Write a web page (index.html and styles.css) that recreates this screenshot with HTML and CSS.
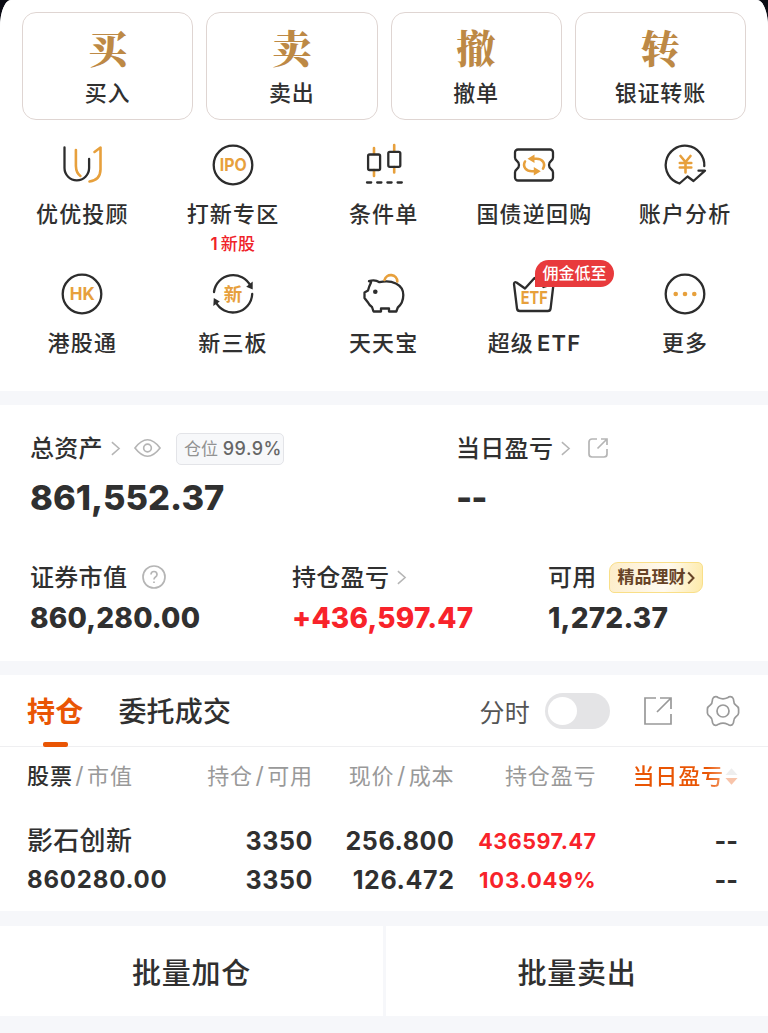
FILE: index.html
```html
<!DOCTYPE html>
<html lang="zh-CN">
<head>
<meta charset="utf-8">
<title>交易</title>
<link rel="stylesheet" href="styles.css">
</head>
<body>
<main class="sheet">
  <section class="cards">
    <div class="card"><b class="card-mark">买</b><span class="card-label">买入</span></div>
    <div class="card"><b class="card-mark">卖</b><span class="card-label">卖出</span></div>
    <div class="card"><b class="card-mark">撤</b><span class="card-label">撤单</span></div>
    <div class="card"><b class="card-mark">转</b><span class="card-label">银证转账</span></div>
  </section>

  <section class="tools">
    <div class="tool">
      <svg class="icon" viewBox="0 0 44 44"><path class="ink" d="M4.500 4.500v20.500a12.300 12.300 0 0 0 24.600 0V16"/><path class="gold" d="M15.900 7v16q.2 7 4.500 10M34.500 9l6-4.500v22q-.2 10.500-11 12"/></svg>
      <span class="label">优优投顾</span>
    </div>
    <div class="tool">
      <svg class="icon" viewBox="0 0 44 44"><circle class="ink" cx="22" cy="22" r="19.300"/><text class="icon-text" x="22.300" y="28.300" font-size="17.500" textLength="27" lengthAdjust="spacingAndGlyphs">IPO</text></svg>
      <span class="label">打新专区</span><span class="note">1<span class="note-text">新股</span></span>
    </div>
    <div class="tool">
      <svg class="icon" viewBox="0 0 44 44"><path class="gold" d="M12 5v6m0 16v6M32.200 2v6m0 16v5.500"/><rect class="ink" x="6.100" y="11.500" width="12" height="15.500" rx="1.500"/><rect class="ink" x="26.300" y="8.800" width="12" height="15" rx="1.500"/><path class="ink" d="M5 39.500h4.200m6 0h4.200m6 0h4.200m6 0h4.200"/></svg>
      <span class="label">条件单</span>
    </div>
    <div class="tool">
      <svg class="icon" viewBox="0 0 44 44"><path class="ink" d="M3 9.500a3 3 0 0 1 3-3h32a3 3 0 0 1 3 3v5q0 2-2 3.500a5 5 0 0 0 0 8q2 1.500 2 3.500v5a3 3 0 0 1-3 3H6a3 3 0 0 1-3-3v-5q0-2 2-3.500a5 5 0 0 0 0-8q-2-1.500-2-3.500z"/><path class="gold" d="M13 18.500c-3 5.500 1.500 9.800 7 9.800h4M20 15.700h4.500c6 0 9.500 4.500 6.500 10"/><path class="gold-fill" d="M22.500 11.500v8.400l-7-4.200zM21.800 24.100v8.400l7-4.200z"/></svg>
      <span class="label">国债逆回购</span>
    </div>
    <div class="tool">
      <svg class="icon" viewBox="0 0 44 44"><path class="ink" d="M41.300 23A19.300 19.300 0 1 0 16.500 40.500l8-7 6 4.500 11.500-10.300h-6.500"/><path class="gold" d="M17.500 13l5 6 5-6M22.500 20v9.500M16.800 20h11.500M16.800 24.500h11.500"/></svg>
      <span class="label">账户分析</span>
    </div>
    <div class="tool">
      <svg class="icon" viewBox="0 0 44 44"><circle class="ink" cx="22" cy="22" r="19.300"/><text class="icon-text" x="22.300" y="28.300" font-size="18" textLength="25" lengthAdjust="spacingAndGlyphs">HK</text></svg>
      <span class="label">港股通</span>
    </div>
    <div class="tool">
      <svg class="icon" viewBox="0 0 44 44"><path class="ink" d="M3 20A19.300 19.300 0 0 1 39.500 14M41.200 22A19.300 19.300 0 0 1 4.500 29.500"/><path class="ink-fill" d="M41.700 9.500v8l-6.500-2.800zM2.300 34l.5-8 6 3.500z"/><text class="icon-text" x="22" y="28.500" font-size="18.500">新</text></svg>
      <span class="label">新三板</span>
    </div>
    <div class="tool">
      <svg class="icon" viewBox="0 0 44 44"><path class="ink" d="M9 10.500q-.8-1-2-1.300c4-1.500 7.500-1 10.500 1C29.500 7.500 41.300 12 41.300 23c0 6-2.500 10-5.500 12.500l-1.500 4H27v-3h-8v3h-7.500L10 35q-2.500-1.500-4-4.500L2.500 26v-5.500L6 18.500q1-4 3-8z"/><path class="gold" d="M22.500 8a6.500 6.500 0 0 1 12.800 1.500"/><circle class="ink-fill" cx="13.300" cy="19.700" r="2.300"/></svg>
      <span class="label">天天宝</span>
    </div>
    <div class="tool">
      <svg class="icon" viewBox="0 0 44 44"><path class="ink" d="M2 12l3 24.500q.3 2.500 2.800 2.500h28q2.500 0 2.800-2.500L41.500 12l-10 3-9-9-9.500 10.500-8.500-6Q2 9.500 2 12z"/><text class="icon-text" x="22.300" y="32" font-size="18" textLength="27" lengthAdjust="spacingAndGlyphs">ETF</text></svg>
      <span class="label">超级 <span class="label-latin">ETF</span></span>
      <span class="badge">佣金低至</span>
    </div>
    <div class="tool">
      <svg class="icon" viewBox="0 0 44 44"><circle class="ink" cx="22" cy="22" r="19.300"/><g class="gold-fill"><circle cx="12.700" cy="22" r="2.300"/><circle cx="22" cy="22" r="2.300"/><circle cx="31.300" cy="22" r="2.300"/></g></svg>
      <span class="label">更多</span>
    </div>
  </section>

  <section class="assets">
    <div class="asset asset-total">
      <div class="asset-head"><span>总资产</span>
        <svg class="chevron" viewBox="0 0 10 16"><path d="M1 1l8 7-8 7"/></svg>
        <svg class="eye" viewBox="0 0 28 20"><path d="M1 10Q14-7 27 10 14 27 1 10z"/><circle cx="14" cy="10" r="4"/></svg>
        <span class="ratio">仓位 <b>99.9%</b></span>
      </div>
      <div class="asset-value large">861,552.37</div>
    </div>
    <div class="asset asset-today">
      <div class="asset-head"><span>当日盈亏</span>
        <svg class="chevron" viewBox="0 0 10 16"><path d="M1 1l8 7-8 7"/></svg>
        <svg class="share-small" viewBox="0 0 22 22"><path d="M10 2H5a3 3 0 0 0-3 3v12a3 3 0 0 0 3 3h12a3 3 0 0 0 3-3v-5M10.500 11.500L20 2M14 2h6v6"/></svg>
      </div>
      <div class="asset-value large dashes">--</div>
    </div>
    <div class="asset asset-market">
      <div class="asset-head"><span>证券市值</span>
        <svg class="help" viewBox="0 0 24 24"><circle cx="12" cy="12" r="11"/><path d="M9 9.500q0-3 3-3t3 3q0 1.500-1.500 2.500T12 14.500M12 16.500v1.500"/></svg>
      </div>
      <div class="asset-value">860,280.00</div>
    </div>
    <div class="asset asset-profit">
      <div class="asset-head"><span>持仓盈亏</span>
        <svg class="chevron" viewBox="0 0 10 16"><path d="M1 1l8 7-8 7"/></svg>
      </div>
      <div class="asset-value up">+436,597.47</div>
    </div>
    <div class="asset asset-cash">
      <div class="asset-head"><span>可用</span>
        <span class="promo"><span>精品理财</span><svg class="promo-arrow" viewBox="0 0 8 14"><path d="M1.200 1.500L6.500 7l-5.300 5.500"/></svg></span>
      </div>
      <div class="asset-value">1,272.37</div>
    </div>
  </section>

  <section class="holdings">
    <header class="tabs">
      <span class="tab active">持仓</span>
      <span class="tab">委托成交</span>
      <span class="switch-label">分时</span>
      <span class="switch"></span>
      <svg class="share" viewBox="0 0 30 30"><path d="M13 2H2v26h26V18M17 2h11v11M14 16L28 2"/></svg>
      <svg class="gear" viewBox="0 0 34 34"><path d="M12.500 3.800Q17 5.800 21.500 3.800q2.500-2.300 5-.3 1.200 1.200 1.200 3.200 0 2.800 2 4.300 3 2 2.900 4v4q.1 2-2.900 4-2 1.500-2 4.300 0 2-1.200 3.200-2.500 2-5-.3-4.500-2-9 0-2.500 2.300-5 .3-1.200-1.200-1.200-3.200 0-2.800-2-4.300-3-2-2.900-4v-4q-.1-2 2.900-4 2-1.500 2-4.300 0-2 1.200-3.200 2.500-2 5 .3z"/><circle cx="17" cy="17" r="6"/></svg>
    </header>
    <div class="row columns">
      <span><em>股票</em><i>/</i>市值</span>
      <span>持仓<i>/</i>可用</span>
      <span>现价<i>/</i>成本</span>
      <span>持仓盈亏</span>
      <span class="sorted">当日盈亏<svg class="sort" viewBox="0 0 14 20"><path class="sort-up" d="M7 1l6.500 7.500H.5z"/><path class="sort-down" d="M7 19l6.500-7.500H.5z"/></svg></span>
    </div>
    <div class="row stock first">
      <span class="name">影石创新</span><span>3350</span><span>256.800</span><span class="up">436597.47</span><span class="none">--</span>
    </div>
    <div class="row stock">
      <span class="amount">860280.00</span><span>3350</span><span>126.472</span><span class="up rate">103.049%</span><span class="none">--</span>
    </div>
  </section>

  <footer class="actions"><span>批量加仓</span><span>批量卖出</span></footer>
</main>
</body>
</html>
```
FILE: styles.css
```css
* { box-sizing: border-box; }
body {
  margin: 0;
  background: #0b0c14;
  color: #303030;
  font-family: Inter, "Noto Sans CJK SC", sans-serif;
}
svg { display: block; flex: none; fill: none; overflow: visible; }
em, i { font-style: normal; }
.sheet {
  display: flex;
  flex-direction: column;
  gap: 14px;
  height: 1033px;
  overflow: hidden;
  background: #f6f7fa;
  border-radius: 11px 11px 0 0 / 27px 27px 0 0;
}

.cards {
  display: grid;
  grid-template-columns: repeat(4, 1fr);
  gap: 13px;
  padding: 12px 22px 0;
  height: 120px;
  background: #fff;
  margin-bottom: -14px;
}
.card {
  display: flex;
  flex-direction: column;
  align-items: center;
  border: 1px solid #dfd5d2;
  border-radius: 14px;
  padding-top: 9px;
}
.card-mark {
  height: 48px;
  font: 900 39px/48px "Noto Serif CJK SC", "Noto Serif SC", "Noto Sans CJK SC", serif;
  color: #bd8945;
}
.card-label { font-size: 22px; font-weight: 500; line-height: 47px; letter-spacing: .8px; }

.tools {
  display: grid;
  grid-template-columns: repeat(5, 150.700px);
  grid-template-rows: 129px 142px;
  padding: 0 7px;
  height: 271px;
  background: #fff;
}
.tool {
  position: relative;
  display: flex;
  flex-direction: column;
  align-items: center;
  padding-top: 23px;
}
.icon { width: 44px; height: 44px; }
.ink { stroke: #2d2d2d; stroke-width: 2.300; stroke-linejoin: round; stroke-linecap: round; }
.gold { stroke: #e7a03c; stroke-width: 2.600; stroke-linejoin: round; stroke-linecap: round; }
.gold-fill { fill: #e7a03c; }
.ink-fill { fill: #2d2d2d; }
.icon-text { fill: #e7a03c; font-weight: 700; text-anchor: middle; }
.label { font-size: 22px; font-weight: 500; line-height: 36px; margin-top: 9px; letter-spacing: 1.200px; white-space: nowrap; }
.label-latin { font-weight: 600; letter-spacing: 1.100px; margin-left: -4px; }
.note { color: #f0232a; font-size: 17px; font-weight: 600; line-height: 22px; margin-top: 1px; }
.note-text { font-weight: 500; margin-left: 3px; letter-spacing: .5px; }
.badge {
  position: absolute;
  left: 76px;
  top: 11px;
  width: 79px;
  height: 27px;
  border-radius: 14px 14px 14px 0;
  background: #e83a3c;
  color: #fff;
  font-size: 16px;
  font-weight: 500;
  line-height: 26px;
  text-align: center;
}

.assets {
  display: grid;
  grid-template-columns: 262px 164px 92px 1fr;
  grid-template-rows: 129px 90px;
  padding: 27px 0 0 30px;
  height: 256px;
  background: #fff;
}
.asset-total { grid-column: 1 / 3; }
.asset-today { grid-column: 3 / 5; }
.asset-market { grid-column: 1; }
.asset-profit { grid-column: 2 / 4; }
.asset-cash { grid-column: 4; }
.asset-head { display: flex; align-items: center; height: 34px; font-size: 24px; letter-spacing: .3px; font-weight: 500; }
.asset-head > span:first-child { line-height: 30px; }
.asset-head > svg { stroke: #b5b5b5; stroke-width: 1.700; position: relative; top: -1px; }
.chevron { width: 9px; height: 15px; margin-left: 8px; }
.eye { width: 27px; height: 20px; margin-left: 14px; }
.ratio {
  width: 108px;
  height: 32px;
  margin-left: 15px;
  border: 1px solid #e3e4e8;
  border-radius: 5px;
  background: #f7f8fa;
  color: #929292;
  font-size: 17px;
  font-weight: 400;
  line-height: 30px;
  padding-left: 7px;
  letter-spacing: 0;
  white-space: nowrap;
}
.ratio b { color: #666; font-size: 18px; font-weight: 500; letter-spacing: .5px; }
.asset-value { font-size: 28px; font-weight: 800; line-height: 44px; letter-spacing: .2px; padding-top: 1px; white-space: nowrap; }
.large { font-size: 34.500px; line-height: 60px; padding-top: 2px; letter-spacing: 0; }
.dashes { letter-spacing: -1px; }
.share-small { width: 22px; height: 22px; margin-left: 17px; }
.help { width: 24px; height: 24px; margin-left: 15px; }
.up { color: #f8232a; }
.promo {
  display: flex;
  align-items: center;
  width: 94px;
  height: 31px;
  margin: -1px 0 0 12px;
  padding-left: 8px;
  border: 1px solid #f9df88;
  border-radius: 9px 5px 9px 5px;
  background: linear-gradient(100deg, #fdedc9, #fffaf0 60%, #fdeaa9);
  color: #674326;
  font-size: 17px;
  font-weight: 700;
  letter-spacing: 0;
}
.promo span { line-height: 24px; padding-bottom: 2px; }
.promo-arrow { width: 8px; height: 14px; margin-left: 1px; stroke: #674326; stroke-width: 2; }

.holdings { height: 236px; background: #fff; }
.tabs { display: flex; align-items: center; height: 72px; padding-left: 27px; border-bottom: 1px solid #efeff1; }
.tab { position: relative; font-size: 28px; font-weight: 500; letter-spacing: .2px; margin-right: 35px; height: 72px; line-height: 75px; }
.tab.active { color: #e95504; font-weight: 700; }
.tab.active::after {
  content: "";
  position: absolute;
  left: 16px;
  bottom: 0;
  width: 25px;
  height: 5px;
  border-radius: 2px;
  background: #e95504;
}
.switch-label { margin-left: auto; font-size: 25px; color: #555; letter-spacing: .3px; }
.switch { width: 65px; height: 36px; padding: 4px 3px; margin-left: 15px; border-radius: 18px; background: #e4e4e6; }
.switch::before { content: ""; display: block; width: 29px; height: 28px; border-radius: 50%; background: #fff; }
.share { width: 30px; height: 30px; margin-left: 33px; stroke: #999; stroke-width: 1.700; }
.gear { width: 34px; height: 34px; margin: 0 28px 0 33px; stroke: #999; stroke-width: 1.700; }
.row {
  display: grid;
  grid-template-columns: 150px 136px 141.500px 142px 141.500px;
  padding-left: 27px;
  text-align: right;
  white-space: nowrap;
}
.row > :first-child { text-align: left; }
.columns { height: 73px; line-height: 59px; font-size: 22px; letter-spacing: .9px; color: #999; }
.columns em { color: #303030; font-weight: 500; }
.columns i { margin: 0 2.500px; font-size: 23px; }
.sorted {
  display: flex;
  justify-content: flex-end;
  align-items: center;
  height: 59px;
  font-weight: 500;
  background: linear-gradient(90deg, #e95504 78%, #f7b892 94%);
  background-clip: text;
  color: transparent;
}
.sort { width: 13px; height: 19px; margin-left: 1px; }
.sort-up { fill: #eee; }
.sort-down { fill: #f8c4aa; }
.stock { height: 39px; line-height: 42px; font-size: 25px; font-weight: 750; letter-spacing: .6px; }
.stock .name { font-size: 26px; font-weight: 500; letter-spacing: .3px; }
.stock .amount { font-size: 24px; letter-spacing: .8px; }
.stock .up { font-size: 21.500px; letter-spacing: .5px; }
.stock .rate { font-size: 22px; letter-spacing: .8px; }
.stock .none { letter-spacing: .1px; }

.actions { display: grid; grid-template-columns: 383px 1fr; grid-template-rows: 90px; gap: 3px; height: 90px; margin-top: 1px; }
.actions span { background: #fff; text-align: center; font-size: 29px; font-weight: 500; line-height: 96px; height: 90px; letter-spacing: .7px; overflow: hidden; }
```
